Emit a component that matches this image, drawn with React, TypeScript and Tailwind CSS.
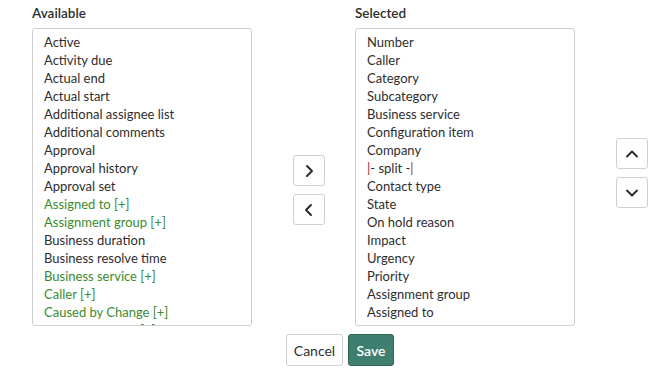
import React from "react";

const available: { t: string; g?: boolean }[] = [
  { t: "Active" },
  { t: "Activity due" },
  { t: "Actual end" },
  { t: "Actual start" },
  { t: "Additional assignee list" },
  { t: "Additional comments" },
  { t: "Approval" },
  { t: "Approval history" },
  { t: "Approval set" },
  { t: "Assigned to [+]", g: true },
  { t: "Assignment group [+]", g: true },
  { t: "Business duration" },
  { t: "Business resolve time" },
  { t: "Business service [+]", g: true },
  { t: "Caller [+]", g: true },
  { t: "Caused by Change [+]", g: true },
  { t: "Change Request [+]", g: true },
];

const selected = [
  "Number",
  "Caller",
  "Category",
  "Subcategory",
  "Business service",
  "Configuration item",
  "Company",
  "SPLIT",
  "Contact type",
  "State",
  "On hold reason",
  "Impact",
  "Urgency",
  "Priority",
  "Assignment group",
  "Assigned to",
  "Short description",
];

const Chev = ({ d }: { d: string }) => (
  <svg width="18" height="18" viewBox="0 0 18 18" fill="none" stroke="#2a2a2a" strokeWidth="1.9" strokeLinecap="round" strokeLinejoin="round">
    <path d={d} />
  </svg>
);

const IconBtn = ({ d }: { d: string }) => (
  <button className="w-[32px] h-[31px] flex items-center justify-center border border-[#d0d0d0] rounded-[3px] bg-white">
    <Chev d={d} />
  </button>
);

export default function App() {
  return (
    <div
      className="w-[659px] h-[376px] bg-white text-[#2e2e2e] text-[13px] overflow-hidden"
      style={{ fontFamily: "Lato, 'Open Sans', sans-serif" }}
    >
      <div className="flex pl-[32px]">
        <div className="w-[220px] flex flex-col">
          <div className="h-[28px] pt-[4px] font-semibold text-[13.5px] leading-[18px]">Available</div>
          <div className="h-[298px] border border-[#cfcfcf] rounded-[3px] overflow-hidden pl-[11px] pt-[4px]">
            {available.map((a) => (
              <div key={a.t} className={"leading-[18px] whitespace-nowrap " + (a.g ? "text-[#3c8a2e]" : "")}>
                {a.t}
              </div>
            ))}
          </div>
        </div>
        <div className="ml-[41px] pt-[155px] flex flex-col gap-[8px]">
          <IconBtn d="M7 4 L12 9 L7 14" />
          <IconBtn d="M11 4 L6 9 L11 14" />
        </div>
        <div className="ml-[30px] w-[220px] flex flex-col">
          <div className="h-[28px] pt-[4px] font-semibold text-[13.5px] leading-[18px]">Selected</div>
          <div className="h-[298px] border border-[#cfcfcf] rounded-[3px] overflow-hidden pl-[11px] pt-[4px]">
            {selected.map((s) => (
              <div key={s} className="leading-[18px] whitespace-nowrap">
                {s === "SPLIT" ? (
                  <span>
                    <span className="text-[#a0282a]">|</span>- split -<span className="text-[#a0282a]">|</span>
                  </span>
                ) : (
                  s
                )}
              </div>
            ))}
          </div>
        </div>
        <div className="ml-[41px] pt-[138px] flex flex-col gap-[8px]">
          <IconBtn d="M4 11.5 L9 6.5 L14 11.5" />
          <IconBtn d="M4 6.5 L9 11.5 L14 6.5" />
        </div>
      </div>
      <div className="flex gap-[5px] pl-[286px] pt-[8px]">
        <button className="h-[32px] w-[57px] border border-[#cfcfcf] rounded-[3px] bg-white text-[14px]">Cancel</button>
        <button className="h-[32px] w-[46px] border border-[#2f6257] rounded-[3px] bg-[#3e7f70] text-white font-semibold text-[14px]">Save</button>
      </div>
    </div>
  );
}
